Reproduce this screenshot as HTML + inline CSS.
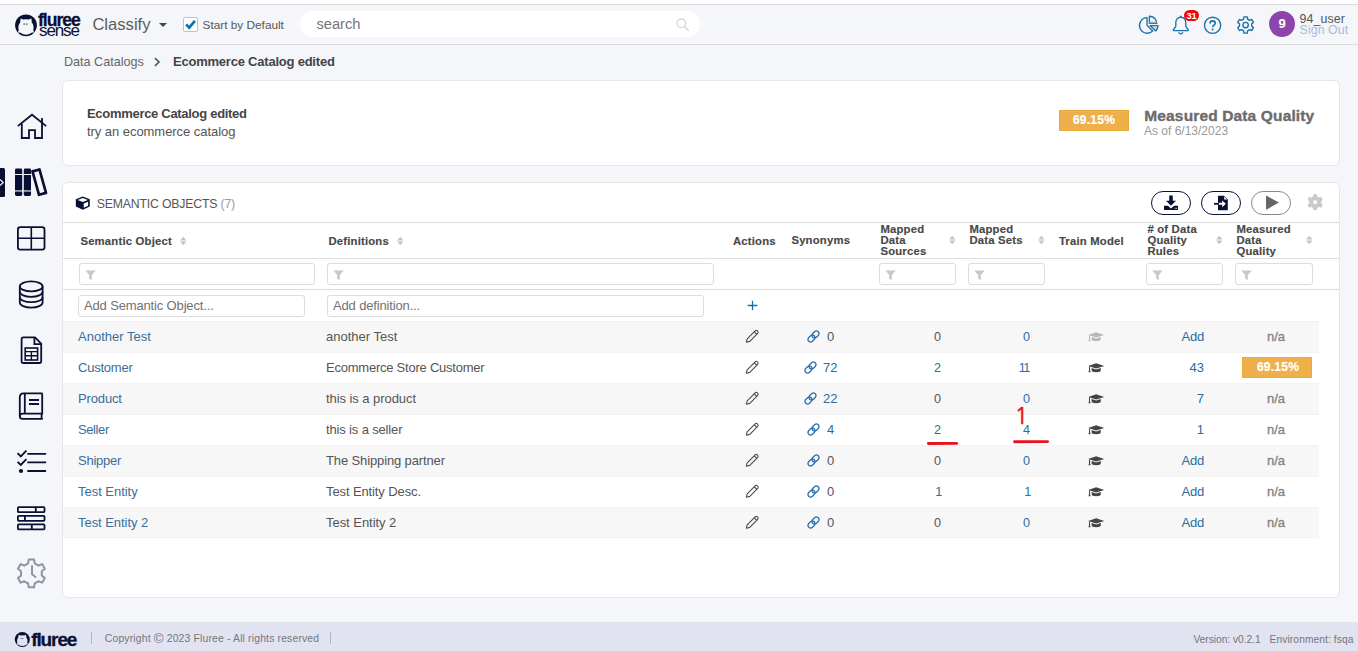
<!DOCTYPE html>
<html lang="en">
<head>
<meta charset="utf-8">
<title>Fluree Sense - Ecommerce Catalog edited</title>
<style>
*{box-sizing:border-box;margin:0;padding:0}
html,body{width:1358px;height:651px;overflow:hidden}
body{background:#f5f6fa;font-family:"Liberation Sans",sans-serif;font-size:13px;color:#555;position:relative}
.a{position:absolute;white-space:nowrap}
svg{display:block;overflow:visible}
.topstrip{left:0;top:0;width:1358px;height:4px;background:#fff}
.hdr{left:0;top:4px;width:1358px;height:41px;border-top:1px solid #dadadc;border-bottom:1px solid #dadadc;background:#f5f6fa}
.card{background:#fff;border:1px solid #e6e6e6;border-radius:6px}
.b{font-weight:bold}
.t13{font-size:13px;line-height:16px}
.t12{font-size:12px;line-height:14px}
.th{font-size:11.3px;line-height:11px;font-weight:bold;color:#484848;white-space:normal;letter-spacing:0.2px;-webkit-text-stroke:0.15px #484848;margin-top:0.8px;margin-left:0.4px}
.fin{height:22px;border:1px solid #ddd;border-radius:3px;background:#fff}
.row{left:63px;width:1256px;height:31px;border-top:1px solid #f2f2f2;background:#fff}
.row.g{background:#f7f7f7}
.lnk{color:#3d6d99}
.c{text-align:center}
.r{text-align:right}
.badge{background:#edb04b;border:1px solid #eaa838;color:#fff;font-weight:bold;font-size:12px;text-align:center;letter-spacing:0.25px;-webkit-text-stroke:0.2px #fff}
.pill{width:40px;height:24px;border:1px solid #0b1238;border-radius:12px;background:#fff}
.foot{left:0;top:622px;width:1358px;height:29px;background:#e1e3f0}
</style>
</head>
<body>
<div class="a topstrip"></div>
<div class="a hdr"></div>

<!-- HEADER -->
<div id="header">
<!-- logo -->
<svg class="a" id="logo" style="left:14px;top:13px" width="24" height="24" viewBox="0 0 24 24">
 <circle cx="12" cy="12.3" r="10.9" fill="#0a1033"/>
 <path d="M6.2 9.2 L6.6 5.6 L9.4 6.6 Q12 5.9 14.6 6.6 L17.4 5.6 L17.8 9.2 Q20.6 13 19.2 17.4 L20.3 19.3 L17.6 19.8 Q12 23.6 6.4 19.8 L3.7 19.3 L4.8 17.4 Q3.4 13 6.2 9.2 Z" fill="#f5f6fa"/>
 <rect x="9.4" y="10.6" width="1.6" height="0.9" fill="#0a1033"/><rect x="11.9" y="10.6" width="1.6" height="0.9" fill="#0a1033"/>
</svg>
<div class="a b" id="lg1" style="left:38px;top:11.2px;font-size:17.6px;line-height:19px;letter-spacing:-1.02px;-webkit-text-stroke:0.3px #0a1033;color:#0a1033">fluree</div>
<div class="a" id="lg2" style="left:39px;top:21.2px;font-size:17px;line-height:19px;letter-spacing:-1.1px;color:#0a1033">sense</div>
<div class="a" id="cls" style="left:92.4px;top:14px;transform:translateY(0.6px);font-size:16.6px;line-height:20px;color:#5c5c5c">Classify</div>
<svg class="a" style="left:159px;top:23px" width="8" height="4" viewBox="0 0 8 4"><path d="M0 0H8L4 4Z" fill="#444"/></svg>
<div class="a" style="left:183px;top:17px;width:15px;height:15px;border:1px solid #c2c2c2;border-radius:2px;background:#fff"></div>
<svg class="a" style="left:185px;top:19px" width="11" height="11" viewBox="0 0 11 11"><path d="M1.2 5.4L4.2 8.6L9.9 1.9" fill="none" stroke="#0f72a8" stroke-width="2.7"/></svg>
<div class="a" id="sbd" style="left:202.6px;top:17.4px;font-size:11.8px;line-height:16px;color:#555">Start by Default</div>
<div class="a" style="left:300px;top:11px;width:400px;height:26px;border-radius:13px;background:#fff"></div>
<div class="a" id="srch" style="left:316.4px;top:14px;font-size:14.7px;line-height:20px;color:#757575">search</div>
<svg class="a" style="left:676px;top:18px" width="13" height="13" viewBox="0 0 13 13"><circle cx="5.3" cy="5.3" r="4.3" fill="none" stroke="#d6d6d6" stroke-width="1.3"/><path d="M8.4 8.4L12.2 12.2" stroke="#d6d6d6" stroke-width="1.6" stroke-linecap="round"/></svg>
<!-- right icons -->
<svg class="a" style="left:1138.7px;top:15.3px" width="20.4" height="19.6" viewBox="0 0 21 20" fill="none" stroke="#1671a9" stroke-width="1.35" stroke-linejoin="round">
 <path d="M8.3 2.7 A8 8 0 1 0 14.2 16.3 L8.3 10.4 Z"/>
 <path d="M10.7 1.2 A7.6 7.6 0 0 1 18.3 8.6 H10.7 Z" />
 <path d="M11.6 10.8 H19.6 A8 8 0 0 1 17.2 16.3 Z"/>
 <path d="M10.7 7.6H18" stroke="#9bb3c9" stroke-width="1.6"/>
 <path d="M14.4 11.8h4.2l-1.8 3z" fill="#b9c8d6" stroke="none"/>
</svg>
<svg class="a" style="left:1172px;top:15.2px" width="17.6" height="19.6" viewBox="0 0 18 20" fill="none" stroke="#1671a9" stroke-width="1.35" stroke-linejoin="round" stroke-linecap="round">
 <path d="M9 1.2V2.3"/>
 <path d="M9 2.3C5.6 2.3 3.9 4.8 3.9 8V11.2C3.9 12.6 2.6 13.4 1.4 14.9C1.1 15.3 1.3 15.9 1.9 15.9H16.1C16.7 15.9 16.9 15.3 16.6 14.9C15.4 13.4 14.1 12.6 14.1 11.2V8C14.1 4.8 12.4 2.3 9 2.3Z"/>
 <path d="M7 18.1C7.5 19 8.2 19.2 9 19.2C9.8 19.2 10.5 19 11 18.1"/>
</svg>
<div class="a b" id="nb" style="left:1184px;top:10px;width:15px;height:11px;border-radius:6px;background:#fb0007;color:#fff;font-size:9.4px;line-height:12.6px;text-align:center;letter-spacing:-0.3px">31</div>
<svg class="a" style="left:1203px;top:16px" width="19" height="19" viewBox="0 0 19 19" fill="none" stroke="#1671a9" stroke-width="1.35">
 <circle cx="9.6" cy="9.3" r="8.1"/>
 <path d="M7 7.4C7 5.8 8.1 4.9 9.6 4.9C11.1 4.9 12.2 5.8 12.2 7.2C12.2 8.9 9.6 9.2 9.6 11.2" stroke-width="1.6"/>
 <circle cx="9.6" cy="13.6" r="1" fill="#1671a9" stroke="none"/>
</svg>
<svg class="a" style="left:1236px;top:15.2px" width="20" height="20" viewBox="0 0 20 20" fill="none" stroke="#1671a9" stroke-width="1.35" stroke-linejoin="round">
 <path d="M11.58 15.88 L11.26 18.13 L7.94 18.13 L7.62 15.88 L5.50 14.65 L3.39 15.50 L1.73 12.63 L3.52 11.23 L3.52 8.77 L1.73 7.37 L3.39 4.50 L5.50 5.35 L7.62 4.12 L7.94 1.87 L11.26 1.87 L11.58 4.12 L13.70 5.35 L15.81 4.50 L17.47 7.37 L15.68 8.77 L15.68 11.23 L17.47 12.63 L15.81 15.50 L13.70 14.65 Z"/>
 <circle cx="9.6" cy="10" r="2.7"/>
</svg>
<div class="a" style="left:1269px;top:11px;width:26px;height:26px;border-radius:13px;background:#8e44ad"></div>
<div class="a b" id="av" style="left:1269px;top:11px;width:26px;height:26px;line-height:26px;text-align:center;color:#fff;font-size:13px">9</div>
<div class="a" id="usr" style="left:1299.6px;top:12.4px;font-size:12.4px;line-height:14px;color:#555;letter-spacing:0.1px">94_user</div>
<div class="a" id="so" style="left:1299.6px;top:23.3px;font-size:12.3px;line-height:14px;color:#a9b9dc;letter-spacing:0.1px">Sign Out</div>
<svg class="a" style="left:152px;top:57px" width="10" height="10" viewBox="0 0 10 10"><path d="M3 1.2L7 5L3 8.8" fill="none" stroke="#555" stroke-width="1.6"/></svg>
</div>

<!-- SIDEBAR -->
<div id="sidebar">
<svg class="a" style="left:0;top:100px" width="62" height="500" viewBox="0 100 62 500" fill="none" stroke="#0a1033" stroke-width="1.8">
 <!-- home -->
 <path d="M18.4 125.6L32 114.7L45.6 125.6" stroke-linecap="round" stroke-linejoin="miter"/>
 <path d="M21.8 123.4V138H29V130.2H35V138H42V118" />
 <!-- active marker -->
 <path d="M0 168H3.5Q5 168 5 169.5V195.5Q5 197 3.5 197H0Z" fill="#0a1033" stroke="none"/>
 <path d="M0 179.5L3.2 182.5L0 185.5" stroke="#fff" stroke-width="1.2"/>
 <!-- books -->
 <g fill="#0a1033" stroke="none">
  <path d="M15 170Q15 168.6 16.4 168.6H20.8Q22.2 168.6 22.2 170V174H15Z"/>
  <rect x="15" y="175" width="7.2" height="15.4"/>
  <path d="M15 191.4H22.2V194.6Q22.2 196 20.8 196H16.4Q15 196 15 194.6Z"/>
  <path d="M23.8 170Q23.8 168.6 25.2 168.6H29.6Q31 168.6 31 170V174H23.8Z"/>
  <rect x="23.8" y="175" width="7.2" height="15.4"/>
  <path d="M23.8 191.4H31V194.6Q31 196 29.6 196H25.2Q23.8 196 23.8 194.6Z"/>
 </g>
 <path d="M32.5 171.4L39.5 169.5L46 192.9L39 194.8Z" stroke-width="2.7" stroke-linejoin="round"/>
 <!-- grid -->
 <rect x="17.9" y="227.2" width="26.6" height="22.4" rx="2.4"/>
 <path d="M31.3 227.2V249.6M17.9 238.2H44.5" stroke-width="1.6"/>
 <!-- database -->
 <ellipse cx="31.2" cy="286.4" rx="11.4" ry="5" />
 <path d="M19.8 286.4V302.6C19.8 305.4 24.9 307.6 31.2 307.6C37.5 307.6 42.6 305.4 42.6 302.6V286.4"/>
 <path d="M19.8 291.8C19.8 294.6 24.9 296.8 31.2 296.8C37.5 296.8 42.6 294.6 42.6 291.8"/>
 <path d="M19.8 297.2C19.8 300 24.9 302.2 31.2 302.2C37.5 302.2 42.6 300 42.6 297.2"/>
 <!-- file table -->
 <path d="M35 337.4H23.4Q21.6 337.4 21.6 339.2V361.2Q21.6 363 23.4 363H39.4Q41.2 363 41.2 361.2V343.6Z" stroke-linejoin="round"/>
 <path d="M34.4 337.6V344.2H41"/>
 <rect x="25.2" y="348" width="12.4" height="12" stroke-width="1.6"/>
 <path d="M25.2 351.6H37.6M25.2 355.8H37.6M31.4 351.6V360" stroke-width="1.4"/>
 <!-- book -->
 <path d="M42.6 393.4H23.6Q19.8 393.4 19.8 397.2V416.2" />
 <path d="M24.8 393.4V413.6" />
 <path d="M42.2 393.4V413.6H22.6Q19.8 413.6 19.8 416.2Q19.8 418.8 22.6 418.8H42.8" />
 <path d="M41.6 413.6V418.8" />
 <path d="M29 400H39M29 404H39" stroke-width="1.8"/>
 <!-- checklist -->
 <path d="M28 453.8H45.4M28 462.4H45.4M28 471H45.4" stroke-linecap="round"/>
 <path d="M17.6 453.2L20.8 456.4L26.4 450.6M17.6 461.8L20.8 465L26.4 459.2" stroke-width="1.9"/>
 <circle cx="21" cy="471" r="2.1" fill="#0a1033" stroke="none"/>
 <!-- rows -->
 <rect x="17.9" y="507.2" width="26.6" height="5" rx="0.8"/>
 <rect x="17.9" y="515.8" width="26.6" height="5" rx="0.8"/>
 <rect x="17.9" y="524.4" width="26.6" height="5" rx="0.8"/>
 <path d="M35.8 507.2V512.2M24.9 515.8V520.8M31.8 524.4V529.4"/>
 <!-- gear clock -->
 <g stroke="#9094a6" stroke-width="2" stroke-linejoin="round" stroke-linecap="round">
  <path d="M34.68 583.48 L34.06 587.35 L28.74 587.35 L28.12 583.48 L24.31 581.28 L20.65 582.68 L17.99 578.07 L21.03 575.60 L21.03 571.20 L17.99 568.73 L20.65 564.12 L24.31 565.52 L28.12 563.32 L28.74 559.45 L34.06 559.45 L34.68 563.32 L38.49 565.52 L42.15 564.12 L44.81 568.73 L41.77 571.20 L41.77 575.60 L44.81 578.07 L42.15 582.68 L38.49 581.28 Z"/>
  <path d="M32 566V574.2L35.6 577" />
 </g>
</svg>
</div>

<!-- BREADCRUMB -->
<div class="a t13" id="bc1" style="left:64px;top:54px;font-size:12.6px;color:#666">Data Catalogs</div>
<div class="a t13 b" id="bc2" style="left:173px;top:54px;letter-spacing:-0.22px;color:#444">Ecommerce Catalog edited</div>

<!-- CARD 1 -->
<div class="a card" style="left:62px;top:80px;width:1278px;height:86px"></div>
<div class="a t13 b" id="c1t" style="left:87px;top:106px;letter-spacing:-0.3px;color:#444">Ecommerce Catalog edited</div>
<div class="a t13" id="c1s" style="left:87px;top:124px;letter-spacing:-0.05px;color:#555">try an ecommerce catalog</div>
<div class="a badge" id="bd1" style="left:1059px;top:110px;width:70px;height:21px;line-height:19px">69.15%</div>
<div class="a b" id="mdq" style="left:1144.3px;top:106px;font-size:15.5px;line-height:20px;color:#6b6b6b;letter-spacing:0.14px;-webkit-text-stroke:0.35px #6b6b6b">Measured Data Quality</div>
<div class="a" id="asof" style="left:1144px;top:124px;font-size:12px;line-height:14px;color:#999">As of 6/13/2023</div>

<!-- CARD 2 -->
<div class="a card" style="left:62px;top:182px;width:1278px;height:416px"></div>
<div id="card2">
<svg class="a" style="left:74.7px;top:195.8px" width="15.6" height="14.1" viewBox="0 0 15 15" preserveAspectRatio="none"><path d="M7.5 0.4L14.2 3.4V11.2L7.5 14.6L0.8 11.2V3.4Z" fill="#0a1033"/><path d="M2.6 4.2L7.5 6.4L12.4 4.2L7.5 2.2Z" fill="#fff"/><path d="M8.4 8V12.6L12.6 10.4V6Z" fill="#fff"/></svg>
<div class="a" id="so_t" style="left:96.8px;top:196px;font-size:12.3px;line-height:16px;color:#555;letter-spacing:-0.2px">SEMANTIC OBJECTS <span style="color:#999">(7)</span></div>
<div class="a pill" style="left:1151px;top:191px"></div>
<svg class="a" style="left:1163px;top:195px" width="16" height="16" viewBox="0 0 16 16" fill="#0a1033"><path d="M6.2 0.6H9.8V5.8H13L8 10.8L3 5.8H6.2Z"/><path d="M1 10.8H4.8L8 13.4L11.2 10.8H15V15H1Z"/><rect x="11.6" y="12.8" width="1" height="0.9" fill="#fff"/><rect x="13" y="12.8" width="1" height="0.9" fill="#fff"/></svg>
<div class="a pill" style="left:1201px;top:191px"></div>
<svg class="a" style="left:1213px;top:195px" width="17" height="16" viewBox="0 0 17 16" fill="#0a1033"><path d="M5 0.8H11L14.8 4.6V15.2H5V9.8H9.2V12.2L12.8 8.8L9.2 5.4V7.8H5Z"/><path d="M11.2 1.4V4.4H14.2Z" fill="#fff"/><rect x="1" y="7.9" width="5" height="1.8"/></svg>
<div class="a pill" style="left:1251px;top:191px;border-color:#8a8a8a"></div>
<svg class="a" style="left:1264.6px;top:195.4px" width="14.6" height="15.2" viewBox="0 0 14 14" preserveAspectRatio="none"><path d="M1 0.4L13.4 7L1 13.6Z" fill="#666"/></svg>
<svg class="a" style="left:1306.9px;top:194px" width="16.4" height="16.4" viewBox="0 0 18 18"><path fill-rule="evenodd" d="M10.92 14.90 L10.63 17.24 L7.37 17.24 L7.08 14.90 L4.85 13.61 L2.68 14.53 L1.05 11.71 L2.94 10.29 L2.94 7.71 L1.05 6.29 L2.68 3.47 L4.85 4.39 L7.08 3.10 L7.37 0.76 L10.63 0.76 L10.92 3.10 L13.15 4.39 L15.32 3.47 L16.95 6.29 L15.06 7.71 L15.06 10.29 L16.95 11.71 L15.32 14.53 L13.15 13.61 Z M9 6.3A2.7 2.7 0 1 0 9 11.7A2.7 2.7 0 1 0 9 6.3Z" fill="#c9c9c9" stroke="#c9c9c9" stroke-width="1" stroke-linejoin="round"/></svg>
<div class="a" style="left:63px;top:222px;width:1276px;height:1px;background:#ddd"></div>
<div class="a" style="left:63px;top:258px;width:1276px;height:1px;background:#ddd"></div>
<div class="a" style="left:63px;top:289px;width:1276px;height:1px;background:#ddd"></div>
<div class="a th" id="h1" style="left:80px;top:235.0px;white-space:nowrap;">Semantic Object</div>
<svg class="a" style="left:179.8px;top:236.1px" width="6.6" height="10" viewBox="0 0 6.6 10"><path d="M0.2 4.4L3.3 0.7L6.4 4.4Z" fill="#c2c2c2"/><path d="M0.2 5.6L3.3 9.3L6.4 5.6Z" fill="#c2c2c2"/></svg>
<div class="a th" id="h2" style="left:328px;top:235.0px;white-space:nowrap;">Definitions</div>
<svg class="a" style="left:396.8px;top:236.1px" width="6.6" height="10" viewBox="0 0 6.6 10"><path d="M0.2 4.4L3.3 0.7L6.4 4.4Z" fill="#c2c2c2"/><path d="M0.2 5.6L3.3 9.3L6.4 5.6Z" fill="#c2c2c2"/></svg>
<div class="a th" id="h3" style="left:732.5px;top:235.0px;white-space:nowrap;">Actions</div>
<div class="a th" id="h4" style="left:791px;top:234.5px;white-space:nowrap;">Synonyms</div>
<div class="a th" id="h5" style="left:880px;top:223.5px;white-space:nowrap;">Mapped<br>Data<br>Sources</div>
<svg class="a" style="left:948.8px;top:235.1px" width="6.6" height="10" viewBox="0 0 6.6 10"><path d="M0.2 4.4L3.3 0.7L6.4 4.4Z" fill="#c2c2c2"/><path d="M0.2 5.6L3.3 9.3L6.4 5.6Z" fill="#c2c2c2"/></svg>
<div class="a th" id="h6" style="left:969px;top:223.7px;white-space:nowrap;">Mapped<br>Data Sets</div>
<svg class="a" style="left:1037.8px;top:235.1px" width="6.6" height="10" viewBox="0 0 6.6 10"><path d="M0.2 4.4L3.3 0.7L6.4 4.4Z" fill="#c2c2c2"/><path d="M0.2 5.6L3.3 9.3L6.4 5.6Z" fill="#c2c2c2"/></svg>
<div class="a th" id="h7" style="left:1058.5px;top:235.0px;white-space:nowrap;">Train Model</div>
<div class="a th" id="h8" style="left:1147px;top:223.5px;white-space:nowrap;"># of Data<br>Quality<br>Rules</div>
<svg class="a" style="left:1215.8px;top:235.1px" width="6.6" height="10" viewBox="0 0 6.6 10"><path d="M0.2 4.4L3.3 0.7L6.4 4.4Z" fill="#c2c2c2"/><path d="M0.2 5.6L3.3 9.3L6.4 5.6Z" fill="#c2c2c2"/></svg>
<div class="a th" id="h9" style="left:1236px;top:223.5px;white-space:nowrap;">Measured<br>Data<br>Quality</div>
<svg class="a" style="left:1305.8px;top:235.1px" width="6.6" height="10" viewBox="0 0 6.6 10"><path d="M0.2 4.4L3.3 0.7L6.4 4.4Z" fill="#c2c2c2"/><path d="M0.2 5.6L3.3 9.3L6.4 5.6Z" fill="#c2c2c2"/></svg>
<div class="a fin" style="left:79px;top:263px;width:236px;height:22px"></div>
<svg class="a" style="left:84.8px;top:269.8px" width="11" height="11" viewBox="0 0 11 11"><path d="M0.3 0.6H10.7L6.8 5V10.2L4.2 8.4V5Z" fill="#c8c8c8"/></svg>
<div class="a fin" style="left:327px;top:263px;width:387px;height:22px"></div>
<svg class="a" style="left:332.8px;top:269.8px" width="11" height="11" viewBox="0 0 11 11"><path d="M0.3 0.6H10.7L6.8 5V10.2L4.2 8.4V5Z" fill="#c8c8c8"/></svg>
<div class="a fin" style="left:879px;top:263px;width:77px;height:22px"></div>
<svg class="a" style="left:884.8px;top:269.8px" width="11" height="11" viewBox="0 0 11 11"><path d="M0.3 0.6H10.7L6.8 5V10.2L4.2 8.4V5Z" fill="#c8c8c8"/></svg>
<div class="a fin" style="left:968px;top:263px;width:77px;height:22px"></div>
<svg class="a" style="left:973.8px;top:269.8px" width="11" height="11" viewBox="0 0 11 11"><path d="M0.3 0.6H10.7L6.8 5V10.2L4.2 8.4V5Z" fill="#c8c8c8"/></svg>
<div class="a fin" style="left:1146px;top:263px;width:77px;height:22px"></div>
<svg class="a" style="left:1151.8px;top:269.8px" width="11" height="11" viewBox="0 0 11 11"><path d="M0.3 0.6H10.7L6.8 5V10.2L4.2 8.4V5Z" fill="#c8c8c8"/></svg>
<div class="a fin" style="left:1235px;top:263px;width:78px;height:22px"></div>
<svg class="a" style="left:1240.8px;top:269.8px" width="11" height="11" viewBox="0 0 11 11"><path d="M0.3 0.6H10.7L6.8 5V10.2L4.2 8.4V5Z" fill="#c8c8c8"/></svg>
<div class="a fin" style="left:78px;top:295px;width:227px;height:22px"></div>
<div class="a t13" id="ad1" style="left:84px;top:298px;letter-spacing:-0.15px;color:#727272">Add Semantic Object...</div>
<div class="a fin" style="left:327px;top:295px;width:377px;height:22px"></div>
<div class="a t13" id="ad2" style="left:333px;top:298px;letter-spacing:-0.15px;color:#727272">Add definition...</div>
<svg class="a" style="left:747px;top:300px" width="11" height="11" viewBox="0 0 11 11"><path d="M5.5 0.7V10.3M0.7 5.5H10.3" stroke="#1671a9" stroke-width="1.3"/></svg>
<div class="a row g" style="top:321px"></div>
<div class="a t13 lnk nm" style="left:78px;top:329px;letter-spacing:0px">Another Test</div>
<div class="a t13 df" style="left:326px;top:329px;color:#555;letter-spacing:0px">another Test</div>
<svg class="a" style="left:745.2px;top:329.0px" width="14.6" height="14.6" viewBox="0 0 14 14" fill="none" stroke="#4a4a4a" stroke-width="1.05" stroke-linejoin="round"><path d="M1.3 12.7L2.1 9.4L9.7 1.8Q10.8 0.8 11.9 1.9L12.1 2.1Q13.2 3.2 12.2 4.3L4.6 11.9Z"/><path d="M8.9 2.7L11.3 5.1"/></svg>
<svg class="a" style="left:806.8px;top:330.2px" width="13" height="13" viewBox="0 0 13 13" fill="none" stroke="#2a70ad" stroke-width="1.3"><rect x="-3.9" y="-2.6" width="7.8" height="5.2" rx="2.6" transform="translate(8.5 4.5) rotate(-45)"/><rect x="-3.9" y="-2.6" width="7.8" height="5.2" rx="2.6" transform="translate(4.5 8.5) rotate(-45)"/></svg>
<div class="a t13 sy" style="left:827.0px;top:329px;color:#555">0</div>
<div class="a t13 c ms" style="font-size:12.6px;left:907.6px;width:60px;top:329px;color:#555">0</div>
<div class="a t13 c md" style="font-size:12.6px;left:996.6px;width:60px;top:329px;color:#2a6da3">0</div>
<svg class="a" style="left:1087.5px;top:331.8px" width="16.4" height="10" viewBox="0 0 16 10" preserveAspectRatio="none" fill="#b8b8b8"><path d="M8 0.2L15.9 2.9L8 5.6L0.1 2.9Z"/><path d="M3.5 4.9L8 6.5L12.5 4.9V7.3Q12.5 9.2 8 9.2Q3.5 9.2 3.5 7.3Z"/><path d="M1 3.5H2V7.2L2.6 9.3H0.4L1 7.2Z"/></svg>
<div class="a t13 r ru" style="left:1144px;width:60px;top:329px;color:#2a6da3;letter-spacing:-0.2px">Add</div>
<div class="a t13 c na" style="left:1246px;width:60px;top:329px;color:#858585;-webkit-text-stroke:0.35px #858585">n/a</div>
<div class="a row" style="top:352px"></div>
<div class="a t13 lnk nm" style="left:78px;top:360px;letter-spacing:-0.22px">Customer</div>
<div class="a t13 df" style="left:326px;top:360px;color:#555;letter-spacing:-0.235px">Ecommerce Store Customer</div>
<svg class="a" style="left:745.2px;top:360.0px" width="14.6" height="14.6" viewBox="0 0 14 14" fill="none" stroke="#4a4a4a" stroke-width="1.05" stroke-linejoin="round"><path d="M1.3 12.7L2.1 9.4L9.7 1.8Q10.8 0.8 11.9 1.9L12.1 2.1Q13.2 3.2 12.2 4.3L4.6 11.9Z"/><path d="M8.9 2.7L11.3 5.1"/></svg>
<svg class="a" style="left:803.6px;top:361.2px" width="13" height="13" viewBox="0 0 13 13" fill="none" stroke="#2a70ad" stroke-width="1.3"><rect x="-3.9" y="-2.6" width="7.8" height="5.2" rx="2.6" transform="translate(8.5 4.5) rotate(-45)"/><rect x="-3.9" y="-2.6" width="7.8" height="5.2" rx="2.6" transform="translate(4.5 8.5) rotate(-45)"/></svg>
<div class="a t13 sy" style="left:823.0px;top:360px;color:#2a6da3">72</div>
<div class="a t13 c ms" style="font-size:12.6px;left:907.6px;width:60px;top:360px;color:#2a6da3">2</div>
<div class="a t13 c md" style="font-size:12.6px;left:993.8000000000001px;width:60px;top:360px;color:#2a6da3;letter-spacing:-1.6px">11</div>
<svg class="a" style="left:1087.5px;top:362.8px" width="16.4" height="10" viewBox="0 0 16 10" preserveAspectRatio="none" fill="#444"><path d="M8 0.2L15.9 2.9L8 5.6L0.1 2.9Z"/><path d="M3.5 4.9L8 6.5L12.5 4.9V7.3Q12.5 9.2 8 9.2Q3.5 9.2 3.5 7.3Z"/><path d="M1 3.5H2V7.2L2.6 9.3H0.4L1 7.2Z"/></svg>
<div class="a t13 r ru" style="left:1144px;width:60px;top:360px;color:#2a6da3;letter-spacing:0px">43</div>
<div class="a badge" id="bd2" style="left:1242px;top:357px;width:70px;height:21px;line-height:18px;padding-left:2px">69.15%</div>
<div class="a row g" style="top:383px"></div>
<div class="a t13 lnk nm" style="left:78px;top:391px;letter-spacing:-0.14px">Product</div>
<div class="a t13 df" style="left:326px;top:391px;color:#555;letter-spacing:-0.06px">this is a product</div>
<svg class="a" style="left:745.2px;top:391.0px" width="14.6" height="14.6" viewBox="0 0 14 14" fill="none" stroke="#4a4a4a" stroke-width="1.05" stroke-linejoin="round"><path d="M1.3 12.7L2.1 9.4L9.7 1.8Q10.8 0.8 11.9 1.9L12.1 2.1Q13.2 3.2 12.2 4.3L4.6 11.9Z"/><path d="M8.9 2.7L11.3 5.1"/></svg>
<svg class="a" style="left:803.6px;top:392.2px" width="13" height="13" viewBox="0 0 13 13" fill="none" stroke="#2a70ad" stroke-width="1.3"><rect x="-3.9" y="-2.6" width="7.8" height="5.2" rx="2.6" transform="translate(8.5 4.5) rotate(-45)"/><rect x="-3.9" y="-2.6" width="7.8" height="5.2" rx="2.6" transform="translate(4.5 8.5) rotate(-45)"/></svg>
<div class="a t13 sy" style="left:823.0px;top:391px;color:#2a6da3">22</div>
<div class="a t13 c ms" style="font-size:12.6px;left:907.6px;width:60px;top:391px;color:#555">0</div>
<div class="a t13 c md" style="font-size:12.6px;left:996.6px;width:60px;top:391px;color:#2a6da3">0</div>
<svg class="a" style="left:1087.5px;top:393.8px" width="16.4" height="10" viewBox="0 0 16 10" preserveAspectRatio="none" fill="#444"><path d="M8 0.2L15.9 2.9L8 5.6L0.1 2.9Z"/><path d="M3.5 4.9L8 6.5L12.5 4.9V7.3Q12.5 9.2 8 9.2Q3.5 9.2 3.5 7.3Z"/><path d="M1 3.5H2V7.2L2.6 9.3H0.4L1 7.2Z"/></svg>
<div class="a t13 r ru" style="left:1144px;width:60px;top:391px;color:#2a6da3;letter-spacing:0px">7</div>
<div class="a t13 c na" style="left:1246px;width:60px;top:391px;color:#858585;-webkit-text-stroke:0.35px #858585">n/a</div>
<div class="a row" style="top:414px"></div>
<div class="a t13 lnk nm" style="left:78px;top:422px;letter-spacing:-0.4px">Seller</div>
<div class="a t13 df" style="left:326px;top:422px;color:#555;letter-spacing:-0.15px">this is a seller</div>
<svg class="a" style="left:745.2px;top:422.0px" width="14.6" height="14.6" viewBox="0 0 14 14" fill="none" stroke="#4a4a4a" stroke-width="1.05" stroke-linejoin="round"><path d="M1.3 12.7L2.1 9.4L9.7 1.8Q10.8 0.8 11.9 1.9L12.1 2.1Q13.2 3.2 12.2 4.3L4.6 11.9Z"/><path d="M8.9 2.7L11.3 5.1"/></svg>
<svg class="a" style="left:806.8px;top:423.2px" width="13" height="13" viewBox="0 0 13 13" fill="none" stroke="#2a70ad" stroke-width="1.3"><rect x="-3.9" y="-2.6" width="7.8" height="5.2" rx="2.6" transform="translate(8.5 4.5) rotate(-45)"/><rect x="-3.9" y="-2.6" width="7.8" height="5.2" rx="2.6" transform="translate(4.5 8.5) rotate(-45)"/></svg>
<div class="a t13 sy" style="left:827.0px;top:422px;color:#2a6da3">4</div>
<div class="a t13 c ms" style="font-size:12.6px;left:907.6px;width:60px;top:422px;color:#2a6da3">2</div>
<div class="a t13 c md" style="font-size:12.6px;left:996.6px;width:60px;top:422px;color:#2a6da3">4</div>
<svg class="a" style="left:1087.5px;top:424.8px" width="16.4" height="10" viewBox="0 0 16 10" preserveAspectRatio="none" fill="#444"><path d="M8 0.2L15.9 2.9L8 5.6L0.1 2.9Z"/><path d="M3.5 4.9L8 6.5L12.5 4.9V7.3Q12.5 9.2 8 9.2Q3.5 9.2 3.5 7.3Z"/><path d="M1 3.5H2V7.2L2.6 9.3H0.4L1 7.2Z"/></svg>
<div class="a t13 r ru" style="left:1144px;width:60px;top:422px;color:#2a6da3;letter-spacing:0px">1</div>
<div class="a t13 c na" style="left:1246px;width:60px;top:422px;color:#858585;-webkit-text-stroke:0.35px #858585">n/a</div>
<div class="a row g" style="top:445px"></div>
<div class="a t13 lnk nm" style="left:78px;top:453px;letter-spacing:-0.25px">Shipper</div>
<div class="a t13 df" style="left:326px;top:453px;color:#555;letter-spacing:-0.125px">The Shipping partner</div>
<svg class="a" style="left:745.2px;top:453.0px" width="14.6" height="14.6" viewBox="0 0 14 14" fill="none" stroke="#4a4a4a" stroke-width="1.05" stroke-linejoin="round"><path d="M1.3 12.7L2.1 9.4L9.7 1.8Q10.8 0.8 11.9 1.9L12.1 2.1Q13.2 3.2 12.2 4.3L4.6 11.9Z"/><path d="M8.9 2.7L11.3 5.1"/></svg>
<svg class="a" style="left:806.8px;top:454.2px" width="13" height="13" viewBox="0 0 13 13" fill="none" stroke="#2a70ad" stroke-width="1.3"><rect x="-3.9" y="-2.6" width="7.8" height="5.2" rx="2.6" transform="translate(8.5 4.5) rotate(-45)"/><rect x="-3.9" y="-2.6" width="7.8" height="5.2" rx="2.6" transform="translate(4.5 8.5) rotate(-45)"/></svg>
<div class="a t13 sy" style="left:827.0px;top:453px;color:#555">0</div>
<div class="a t13 c ms" style="font-size:12.6px;left:907.6px;width:60px;top:453px;color:#555">0</div>
<div class="a t13 c md" style="font-size:12.6px;left:996.6px;width:60px;top:453px;color:#2a6da3">0</div>
<svg class="a" style="left:1087.5px;top:455.8px" width="16.4" height="10" viewBox="0 0 16 10" preserveAspectRatio="none" fill="#444"><path d="M8 0.2L15.9 2.9L8 5.6L0.1 2.9Z"/><path d="M3.5 4.9L8 6.5L12.5 4.9V7.3Q12.5 9.2 8 9.2Q3.5 9.2 3.5 7.3Z"/><path d="M1 3.5H2V7.2L2.6 9.3H0.4L1 7.2Z"/></svg>
<div class="a t13 r ru" style="left:1144px;width:60px;top:453px;color:#2a6da3;letter-spacing:-0.2px">Add</div>
<div class="a t13 c na" style="left:1246px;width:60px;top:453px;color:#858585;-webkit-text-stroke:0.35px #858585">n/a</div>
<div class="a row" style="top:476px"></div>
<div class="a t13 lnk nm" style="left:78px;top:484px;letter-spacing:-0.03px">Test Entity</div>
<div class="a t13 df" style="left:326px;top:484px;color:#555;letter-spacing:-0.11px">Test Entity Desc.</div>
<svg class="a" style="left:745.2px;top:484.0px" width="14.6" height="14.6" viewBox="0 0 14 14" fill="none" stroke="#4a4a4a" stroke-width="1.05" stroke-linejoin="round"><path d="M1.3 12.7L2.1 9.4L9.7 1.8Q10.8 0.8 11.9 1.9L12.1 2.1Q13.2 3.2 12.2 4.3L4.6 11.9Z"/><path d="M8.9 2.7L11.3 5.1"/></svg>
<svg class="a" style="left:806.8px;top:485.2px" width="13" height="13" viewBox="0 0 13 13" fill="none" stroke="#2a70ad" stroke-width="1.3"><rect x="-3.9" y="-2.6" width="7.8" height="5.2" rx="2.6" transform="translate(8.5 4.5) rotate(-45)"/><rect x="-3.9" y="-2.6" width="7.8" height="5.2" rx="2.6" transform="translate(4.5 8.5) rotate(-45)"/></svg>
<div class="a t13 sy" style="left:827.0px;top:484px;color:#555">0</div>
<div class="a t13 c ms" style="font-size:12.6px;left:908.8000000000001px;width:60px;top:484px;color:#2a6da3">1</div>
<div class="a t13 c md" style="font-size:12.6px;left:997.8000000000001px;width:60px;top:484px;color:#2a6da3">1</div>
<svg class="a" style="left:1087.5px;top:486.8px" width="16.4" height="10" viewBox="0 0 16 10" preserveAspectRatio="none" fill="#444"><path d="M8 0.2L15.9 2.9L8 5.6L0.1 2.9Z"/><path d="M3.5 4.9L8 6.5L12.5 4.9V7.3Q12.5 9.2 8 9.2Q3.5 9.2 3.5 7.3Z"/><path d="M1 3.5H2V7.2L2.6 9.3H0.4L1 7.2Z"/></svg>
<div class="a t13 r ru" style="left:1144px;width:60px;top:484px;color:#2a6da3;letter-spacing:-0.2px">Add</div>
<div class="a t13 c na" style="left:1246px;width:60px;top:484px;color:#858585;-webkit-text-stroke:0.35px #858585">n/a</div>
<div class="a row g" style="top:507px"></div>
<div class="a t13 lnk nm" style="left:78px;top:515px;letter-spacing:-0.05px">Test Entity 2</div>
<div class="a t13 df" style="left:326px;top:515px;color:#555;letter-spacing:-0.04px">Test Entity 2</div>
<svg class="a" style="left:745.2px;top:515.0px" width="14.6" height="14.6" viewBox="0 0 14 14" fill="none" stroke="#4a4a4a" stroke-width="1.05" stroke-linejoin="round"><path d="M1.3 12.7L2.1 9.4L9.7 1.8Q10.8 0.8 11.9 1.9L12.1 2.1Q13.2 3.2 12.2 4.3L4.6 11.9Z"/><path d="M8.9 2.7L11.3 5.1"/></svg>
<svg class="a" style="left:806.8px;top:516.2px" width="13" height="13" viewBox="0 0 13 13" fill="none" stroke="#2a70ad" stroke-width="1.3"><rect x="-3.9" y="-2.6" width="7.8" height="5.2" rx="2.6" transform="translate(8.5 4.5) rotate(-45)"/><rect x="-3.9" y="-2.6" width="7.8" height="5.2" rx="2.6" transform="translate(4.5 8.5) rotate(-45)"/></svg>
<div class="a t13 sy" style="left:827.0px;top:515px;color:#555">0</div>
<div class="a t13 c ms" style="font-size:12.6px;left:907.6px;width:60px;top:515px;color:#555">0</div>
<div class="a t13 c md" style="font-size:12.6px;left:996.6px;width:60px;top:515px;color:#2a6da3">0</div>
<svg class="a" style="left:1087.5px;top:517.8px" width="16.4" height="10" viewBox="0 0 16 10" preserveAspectRatio="none" fill="#444"><path d="M8 0.2L15.9 2.9L8 5.6L0.1 2.9Z"/><path d="M3.5 4.9L8 6.5L12.5 4.9V7.3Q12.5 9.2 8 9.2Q3.5 9.2 3.5 7.3Z"/><path d="M1 3.5H2V7.2L2.6 9.3H0.4L1 7.2Z"/></svg>
<div class="a t13 r ru" style="left:1144px;width:60px;top:515px;color:#2a6da3;letter-spacing:-0.2px">Add</div>
<div class="a t13 c na" style="left:1246px;width:60px;top:515px;color:#858585;-webkit-text-stroke:0.35px #858585">n/a</div>
<div class="a" style="left:63px;top:537px;width:1256px;height:1px;background:#f2f2f2"></div>
<svg class="a" style="left:920px;top:400px" width="140" height="50" viewBox="920 400 140 50" fill="none" stroke="#e8131d" stroke-linecap="round"><path d="M928.4 443.5L956.6 443.4" stroke-width="2.9"/><path d="M1014.6 441.7L1047.6 441.6" stroke-width="2.9"/></svg>
<div class="a" id="red1" style="left:1014.4px;top:401px;font-family:NanumGothic,&quot;Liberation Sans&quot;,sans-serif;font-size:23px;line-height:30px;-webkit-text-stroke:0.55px #e8131d;color:#e8131d">1</div>
</div>

<!-- FOOTER -->
<div class="a foot"></div>
<div id="footer">
<svg class="a" id="flogo" style="left:14.2px;top:631.1px" width="16.6" height="16.6" viewBox="0 0 24 24">
 <circle cx="12" cy="12.3" r="10.9" fill="#0a1033"/>
 <path d="M6.2 9.2 L6.6 5.6 L9.4 6.6 Q12 5.9 14.6 6.6 L17.4 5.6 L17.8 9.2 Q20.6 13 19.2 17.4 L20.3 19.3 L17.6 19.8 Q12 23.6 6.4 19.8 L3.7 19.3 L4.8 17.4 Q3.4 13 6.2 9.2 Z" fill="#e1e3f0"/>
 <rect x="9.4" y="10.6" width="1.6" height="0.9" fill="#0a1033"/><rect x="11.9" y="10.6" width="1.6" height="0.9" fill="#0a1033"/>
</svg>
<div class="a b" id="fl1" style="left:31.2px;top:628.9px;font-size:19px;line-height:22px;letter-spacing:-1.1px;-webkit-text-stroke:0.3px #0a1033;color:#0a1033">fluree</div>
<div class="a" style="left:91px;top:632px;width:1px;height:12px;background:#b4b5c0"></div>
<div class="a" id="cpy" style="left:104.8px;top:632.2px;font-size:10.4px;line-height:14px;letter-spacing:0.16px;color:#75757d">Copyright <span id="cps" style="font-size:13.4px;line-height:10px;letter-spacing:0;position:relative;top:0.6px">©</span> 2023 Fluree - All rights reserved</div>
<div class="a" style="left:330px;top:632px;width:1px;height:12px;background:#b4b5c0"></div>
<div class="a" id="ver" style="left:1193.4px;top:632.5px;font-size:10.2px;line-height:14px;color:#75757d">Version: v0.2.1</div>
<div class="a" id="env" style="left:1269.6px;top:632.5px;font-size:10.2px;line-height:14px;letter-spacing:0.11px;color:#75757d">Environment: fsqa</div>
</div>
</body>
</html>
